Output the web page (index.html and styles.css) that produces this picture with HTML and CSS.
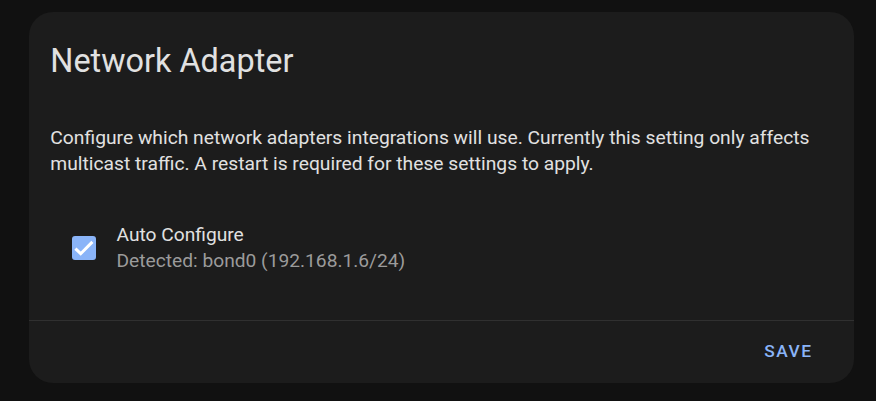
FILE: index.html
```html
<!DOCTYPE html>
<html lang="en">
<head>
<meta charset="utf-8">
<title>Network Adapter</title>
<link rel="stylesheet" href="styles.css">
</head>
<body>
<div class="card">
  <div class="card-header">Network Adapter</div>
  <div class="card-content">
    <p class="description">Configure which network adapters integrations will use. Currently this setting only affects multicast traffic. A restart is required for these settings to apply.</p>
    <div class="option">
      <span class="checkbox">
        <svg viewBox="0 0 24 24" width="24" height="24" aria-hidden="true">
          <path d="M3.4 12.6 L8.7 17.7 L20.4 5.9" fill="none" stroke="#ffffff" stroke-width="3" stroke-linecap="butt" stroke-linejoin="miter"/>
        </svg>
      </span>
      <div class="option-text">
        <div class="option-label">Auto Configure</div>
        <div class="option-secondary">Detected: bond0 (192.168.1.6/24)</div>
      </div>
    </div>
  </div>
  <div class="card-actions">
    <span class="button">Save</span>
  </div>
</div>
</body>
</html>
```

FILE: styles.css
```css
html, body {
  margin: 0;
  background: #111111;
}

body {
  padding: 12px 22px 18px 29px;
  font-family: Roboto, "Noto Sans", "Liberation Sans", sans-serif;
  color: #e1e1e1;
}

.card {
  background: #1c1c1c;
  border-radius: 24px;
  height: 371px;
  display: flex;
  flex-direction: column;
  box-sizing: border-box;
}

.card-header {
  font-size: 32.4px;
  line-height: 42.67px;
  font-weight: 400;
  padding: 28px 21.33px 0;
  color: #e1e1e1;
}

.card-content {
  padding: 0 21.33px;
  flex: 1;
}

.description {
  margin: 42px 0 0;
  font-size: 19.25px;
  line-height: 26.67px;
}

.option {
  display: flex;
  align-items: center;
  gap: 20.5px;
  margin-top: 43.8px;
  padding-left: 21.67px;
}

.checkbox {
  width: 24px;
  height: 24px;
  background: #8ab4f8;
  border-radius: 3px;
  display: flex;
  flex: none;
}

.option-text {
  font-size: 19.2px;
  line-height: 26px;
}

.option-label {
  color: #e1e1e1;
}

.option-secondary {
  color: #9b9b9b;
}

.card-actions {
  border-top: 1.33px solid #303030;
  height: 62px;
  display: flex;
  align-items: center;
  justify-content: flex-end;
  padding-right: 41.5px;
}

.button {
  font-size: 17.33px;
  font-weight: 500;
  letter-spacing: 1.5px;
  text-transform: uppercase;
  color: #8ab4f8;
  margin-bottom: 3px;
}
```
